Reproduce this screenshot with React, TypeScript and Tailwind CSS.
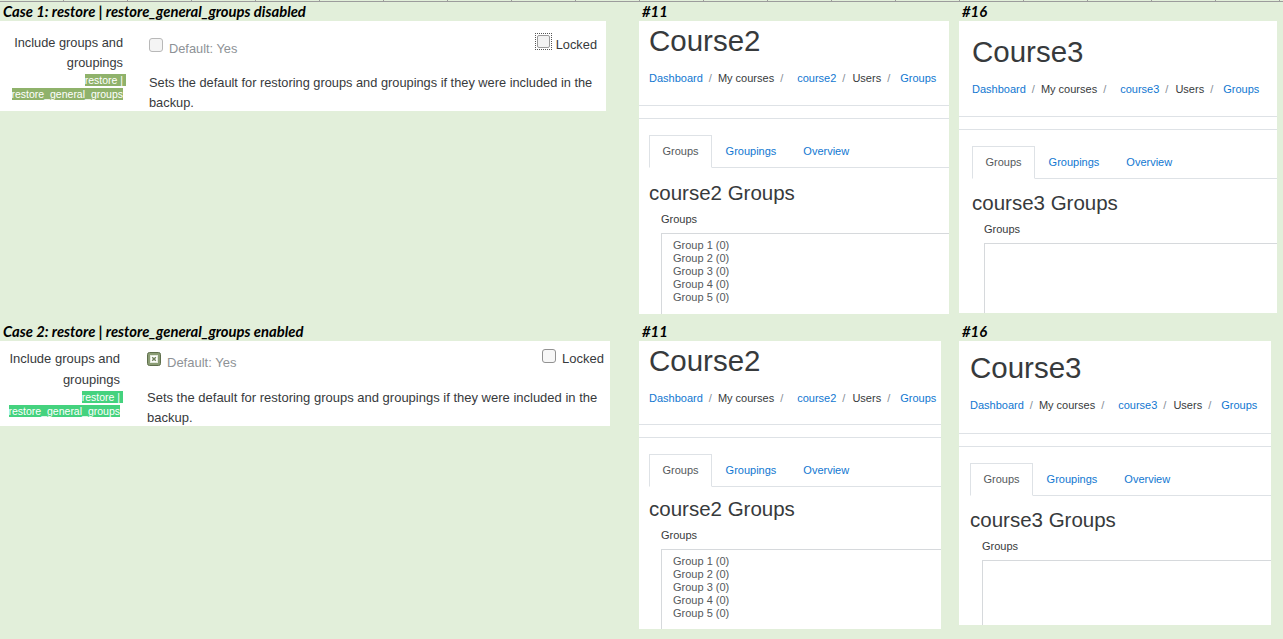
const LINK = "text-[#1177d1]";

function Ruler() {
  return (
    <div className="flex h-[2px] border-b border-[#9c9c9c]">
      {Array.from({ length: 21 }).map((_, i) => (
        <div key={i} className="w-[64px] shrink-0 border-r border-[#9c9c9c]" />
      ))}
    </div>
  );
}

function Caption({ children }: { children: React.ReactNode }) {
  return (
    <div className="h-[19px] pl-[3px] font-['Lato',sans-serif] text-[14.8px] leading-[19px] font-bold italic text-black whitespace-nowrap">
      {children}
    </div>
  );
}

function CheckedBox() {
  return (
    <svg width="14" height="14" viewBox="0 0 14 14" className="shrink-0">
      <rect x="0.5" y="0.5" width="13" height="13" rx="2" fill="#8a9c74" stroke="#5f6f4c" />
      <rect x="3.5" y="3.5" width="7" height="7" fill="#fff" stroke="#e3e9db" />
      <path d="M5.2 5.2l3.6 3.6M8.8 5.2l-3.6 3.6" stroke="#6f805a" strokeWidth="1.4" />
    </svg>
  );
}

function SettingPanel({ enabled }: { enabled: boolean }) {
  const s = enabled
    ? {
        box: "w-[610px] h-[85px] text-[13px]",
        label: "w-[120px] pt-[7px]",
        line: "leading-[21px]",
        tag: "bg-[#44d27e]",
        content: "ml-[27px] pr-[6px] pt-[8px]",
        left: "mt-[3px]",
        desc: "mt-[15px] leading-[20px]",
      }
    : {
        box: "w-[606px] h-[90px] text-[12.8px]",
        label: "w-[123px] pt-[12px]",
        line: "leading-[20px]",
        tag: "bg-[#8fb26b]",
        content: "ml-[26px] pr-[9px] pt-[12px]",
        left: "mt-[5px]",
        desc: "mt-[14px] leading-[19.5px]",
      };
  return (
    <div className={`flex bg-white text-[#373a3c] ${s.box}`}>
      <div className={`shrink-0 text-right ${s.label}`}>
        <div className={s.line}>Include groups and</div>
        <div className={s.line}>groupings</div>
        <div className="text-[10.5px] leading-[14px] text-white">
          <span className={`-mr-[3px] pr-[3px] ${s.tag}`}>restore |</span>
        </div>
        <div className="text-[10.5px] leading-[14px] text-white">
          <span className={s.tag}>restore_general_groups</span>
        </div>
      </div>
      <div className={`flex-1 ${s.content}`}>
        <div className="flex items-start justify-between">
          <div className={`flex items-start ${s.left}`}>
            {enabled ? (
              <CheckedBox />
            ) : (
              <div className="h-[14px] w-[14px] rounded-[3px] border border-[#b8b8b8] bg-[#f4f4f4]" />
            )}
            <span className="mt-[1px] ml-[6px] leading-[20px] text-[#8e9296]">Default: Yes</span>
          </div>
          {enabled ? (
            <div className="flex items-start">
              <div className="h-[14px] w-[14px] rounded-[3px] border border-[#929292] bg-[#f7f7f7]" />
              <span className="ml-[6px] leading-[20px]">Locked</span>
            </div>
          ) : (
            <div className="flex items-start">
              <div className="border border-dotted border-[#555] p-px">
                <div className="h-[13px] w-[13px] rounded-[2px] border border-[#9a9a9a] bg-[#f2f2f2]" />
              </div>
              <span className="mt-[2px] ml-[4px] leading-[20px]">Locked</span>
            </div>
          )}
        </div>
        <p className={s.desc}>
          Sets the default for restoring groups and groupings if they were included in the backup.
        </p>
      </div>
    </div>
  );
}

function Sep() {
  return <span className="mx-[6px] text-[#868e96]">/</span>;
}

function CoursePanel({
  title,
  slug,
  box,
  pad,
  titleMt,
  headMt,
  headPb,
  groups,
}: {
  title: string;
  slug: string;
  box: string;
  pad: string;
  titleMt: string;
  headMt: string;
  headPb: string;
  groups: boolean;
}) {
  return (
    <div className={`overflow-hidden bg-white text-[#373a3c] ${box}`}>
      <div className={`border-b border-[#dee2e6] ${headPb} ${pad} ${titleMt}`}>
        <div className="text-[29.5px] leading-[29px] whitespace-nowrap">{title}</div>
        <div className="mt-[15px] flex text-[11px] leading-[16px] whitespace-nowrap">
          <span className={LINK}>Dashboard</span>
          <Sep />
          <span>My courses</span>
          <Sep />
          <span className={`ml-[8px] ${LINK}`}>{slug}</span>
          <Sep />
          <span className="ml-[1px]">Users</span>
          <Sep />
          <span className={`ml-[4px] ${LINK}`}>Groups</span>
        </div>
      </div>
      <div className={`mt-[12px] border-t border-[#dee2e6] pt-[16px] ${pad}`}>
        <div className="flex border-b border-[#dee2e6] text-[11px] leading-[16px] whitespace-nowrap">
          <div className="-mb-px border border-[#dee2e6] border-b-white bg-white px-[12.5px] pt-[7px] pb-[7px] text-[#55595c]">
            Groups
          </div>
          <div className={`border border-transparent px-[12.5px] pt-[7px] pb-[7px] ${LINK}`}>Groupings</div>
          <div className={`border border-transparent px-[12.5px] pt-[7px] pb-[7px] ${LINK}`}>Overview</div>
        </div>
        <h2 className={`text-[20.5px] leading-[24px] whitespace-nowrap ${headMt}`}>{slug} Groups</h2>
        <div className="ml-[12px] mt-[6px] text-[11px] leading-[16px]">Groups</div>
        <div className="ml-[12px] mt-[6px] h-[200px] w-[400px] border border-[#d6d9dc] pl-[11px] pt-[5px] text-[11px] leading-[13px] text-[#55595c]">
          {groups &&
            [1, 2, 3, 4, 5].map((n) => <div key={n}>Group {n} (0)</div>)}
        </div>
      </div>
    </div>
  );
}

export default function App() {
  return (
    <div className="h-[639px] w-[1283px] overflow-hidden bg-[#e2efda] font-['Liberation_Sans',Arial,sans-serif]">
      <Ruler />
      <div className="grid grid-cols-[639px_320px_324px] grid-rows-[320px_317px]">
        <div>
          <Caption>Case 1: restore | restore_general_groups disabled</Caption>
          <SettingPanel enabled={false} />
        </div>
        <div>
          <Caption>#11</Caption>
          <CoursePanel title="Course2" slug="course2" box="w-[310px] h-[293px]" pad="pl-[10px]" titleMt="pt-[5px]" headMt="mt-[13px]" headPb="pb-[19px]" groups />
        </div>
        <div>
          <Caption>#16</Caption>
          <CoursePanel title="Course3" slug="course3" box="w-[318px] h-[292px]" pad="pl-[13px]" titleMt="pt-[16px]" headMt="mt-[12px]" headPb="pb-[19px]" groups={false} />
        </div>
        <div>
          <Caption>Case 2: restore | restore_general_groups enabled</Caption>
          <SettingPanel enabled />
        </div>
        <div>
          <Caption>#11</Caption>
          <CoursePanel title="Course2" slug="course2" box="w-[302px] h-[288px]" pad="pl-[10px]" titleMt="pt-[5px]" headMt="mt-[10px]" headPb="pb-[18px]" groups />
        </div>
        <div>
          <Caption>#16</Caption>
          <CoursePanel title="Course3" slug="course3" box="w-[312px] h-[284px]" pad="pl-[11px]" titleMt="pt-[12px]" headMt="mt-[12px]" headPb="pb-[20px]" groups={false} />
        </div>
      </div>
    </div>
  );
}
